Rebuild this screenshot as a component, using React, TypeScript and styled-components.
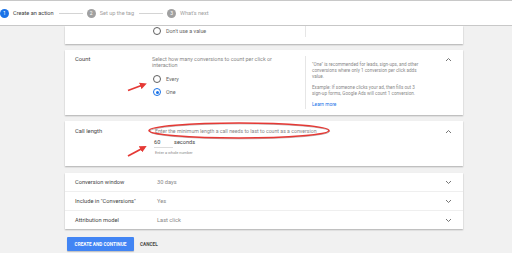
import React from 'react';
import styled, { createGlobalStyle } from 'styled-components';

const GlobalStyle = createGlobalStyle`
  html, body {
    margin: 0;
    padding: 0;
    background: #f1f1f1;
    font-family: Roboto, "Liberation Sans", Arial, sans-serif;
  }
  #root { position: relative; width: 512px; height: 253px; overflow: hidden; }
`;

const steps = [
  { n: 1, label: 'Create an action', active: true },
  { n: 2, label: 'Set up the tag', active: false },
  { n: 3, label: "What's next", active: false },
];

const rows = [
  { label: 'Conversion window', value: '30 days' },
  { label: 'Include in "Conversions"', value: 'Yes' },
  { label: 'Attribution model', value: 'Last click' },
];

const Chevron: React.FC<{ up?: boolean }> = ({ up }) => (
  <ChevronBox>
    <svg width="7" height="5" viewBox="0 0 7 5">
      <path d={up ? 'M1 4 L3.5 1.5 L6 4' : 'M1 1 L3.5 3.5 L6 1'} fill="none" stroke="#666" strokeWidth="0.9" />
    </svg>
  </ChevronBox>
);

const App: React.FC = () => {
  return (
    <>
      <GlobalStyle />
      <Header>
        {steps.map((s, i) => (
          <React.Fragment key={s.n}>
            <Step>
              <StepDot active={s.active}>{s.n}</StepDot>
              <StepLabel active={s.active}>{s.label}</StepLabel>
            </Step>
            {i < steps.length - 1 && <StepLine />}
          </React.Fragment>
        ))}
      </Header>

      <Main>
        <TopCard>
          <span />
          <RadioRow>
            <Radio />
            <RadioText>Don't use a value</RadioText>
          </RadioRow>
          <Side />
        </TopCard>

        <Card>
          <Label>Count</Label>
          <Middle>
            <Desc>Select how many conversions to count per click or interaction</Desc>
            <Radios>
              <RadioRow>
                <Radio />
                <RadioText>Every</RadioText>
              </RadioRow>
              <RadioRow>
                <Radio checked />
                <RadioText>One</RadioText>
              </RadioRow>
            </Radios>
          </Middle>
          <Side>
            <Help>
              <p>"One" is recommended for leads, sign-ups, and other conversions where only 1 conversion per click adds value.</p>
              <p>Example: If someone clicks your ad, then fills out 3 sign-up forms, Google Ads will count 1 conversion.</p>
              <LearnMore>Learn more</LearnMore>
            </Help>
            <Chevron up />
          </Side>
        </Card>

        <CallCard>
          <Label>Call length</Label>
          <CallBody>
            <Desc>Enter the minimum length a call needs to last to count as a conversion</Desc>
            <InputRow>
              <NumberField>60</NumberField>
              <Unit>seconds</Unit>
            </InputRow>
            <Hint>Enter a whole number</Hint>
          </CallBody>
          <Chevron up />
        </CallCard>

        <ListCard>
          {rows.map((r) => (
            <Row key={r.label}>
              <RowLabel>{r.label}</RowLabel>
              <RowValue>{r.value}</RowValue>
              <Chevron />
            </Row>
          ))}
        </ListCard>

        <Actions>
          <PrimaryButton>CREATE AND CONTINUE</PrimaryButton>
          <TextButton>CANCEL</TextButton>
        </Actions>
      </Main>

      <Annotations width="512" height="253" viewBox="0 0 512 253">
        <defs>
          <marker id="head" markerWidth="7" markerHeight="7" refX="4" refY="3.5" orient="auto" markerUnits="userSpaceOnUse">
            <path d="M0 0 L7 3.5 L0 7 Z" fill="#e53935" />
          </marker>
        </defs>
        <line x1="128" y1="90.5" x2="144" y2="84.5" stroke="#e53935" strokeWidth="1.8" markerEnd="url(#head)" />
        <line x1="128" y1="156" x2="144" y2="147.5" stroke="#e53935" strokeWidth="1.8" markerEnd="url(#head)" />
        <ellipse cx="239" cy="130.5" rx="90" ry="7.5" fill="none" stroke="#5a3a3a" strokeWidth="0.8" opacity="0.5" transform="translate(0.5 0.8)" />
        <ellipse cx="239" cy="130.5" rx="90" ry="7.5" fill="none" stroke="#e53935" strokeWidth="1.6" />
      </Annotations>
    </>
  );
};

const Header = styled.div`
  height: 24px;
  background: #fff;
  border-top: 1px solid #c8c8c8;
  border-bottom: 1px solid #c8c8c8;
  display: flex;
  align-items: center;
  box-sizing: content-box;
`;

const Step = styled.div`
  display: flex;
  align-items: center;
  gap: 4px;
`;

const StepDot = styled.span<{ active?: boolean }>`
  width: 9px;
  height: 9px;
  border-radius: 50%;
  background: ${(p) => (p.active ? '#1a73e8' : '#a0a0a0')};
  color: #fff;
  font-size: 5px;
  display: flex;
  align-items: center;
  justify-content: center;
`;

const StepLabel = styled.span<{ active?: boolean }>`
  font-size: 5.6px;
  color: ${(p) => (p.active ? '#3c3c3c' : '#a0a0a0')};
`;

const StepLine = styled.span`
  width: 24px;
  height: 1px;
  background: #d4d4d4;
  margin: 0 4px 0 5px;
`;

const Main = styled.div`
  width: 398px;
  margin-left: 65px;
  display: flex;
  flex-direction: column;
`;

const CardBase = styled.div`
  background: #fff;
  box-shadow: 0 1px 1.5px rgba(0, 0, 0, 0.28);
`;

const TopCard = styled(CardBase)`
  height: 18px;
  display: grid;
  grid-template-columns: 87px 153px 1fr;
  align-items: start;
  & > div:last-child {
    height: 11px;
  }
  & > div:nth-child(2) {
    margin-top: 1px;
  }
`;

const Card = styled(CardBase)`
  margin-top: 6px;
  height: 65px;
  display: grid;
  grid-template-columns: 87px 153px 1fr;
  padding-top: 6px;
  box-sizing: border-box;
`;

const Label = styled.div`
  font-size: 5.8px;
  color: #444;
  padding-left: 10px;
  line-height: 7px;
`;

const Middle = styled.div`
  display: flex;
  flex-direction: column;
`;

const Desc = styled.div`
  font-size: 5.4px;
  line-height: 6px;
  color: #888;
  width: 145px;
`;

const Radios = styled.div`
  margin-top: 7px;
  display: flex;
  flex-direction: column;
  gap: 5px;
`;

const RadioRow = styled.div`
  display: flex;
  align-items: center;
  gap: 5px;
  margin-left: 1px;
`;

const Radio = styled.span<{ checked?: boolean }>`
  width: 6px;
  height: 6px;
  border-radius: 50%;
  border: 1px solid ${(p) => (p.checked ? '#1a73e8' : '#5f5f5f')};
  position: relative;
  &::after {
    content: '';
    display: ${(p) => (p.checked ? 'block' : 'none')};
    position: absolute;
    inset: 1.5px;
    border-radius: 50%;
    background: #1a73e8;
  }
`;

const RadioText = styled.span`
  font-size: 5.4px;
  color: #666;
`;

const Side = styled.div`
  border-left: 1px solid #e6e6e6;
  margin-bottom: 6px;
  display: flex;
  justify-content: space-between;
  padding-left: 6px;
`;

const Help = styled.div`
  width: 112px;
  padding-top: 6px;
  p {
    margin: 0 0 5px;
    font-size: 4.6px;
    line-height: 6px;
    color: #8a8a8a;
  }
`;

const LearnMore = styled.div`
  font-size: 4.8px;
  color: #1a73e8;
  margin-top: 2px;
`;

const ChevronBox = styled.span`
  width: 7px;
  height: 7px;
  margin-right: 11px;
  display: flex;
  align-items: center;
  justify-content: center;
`;

const CallCard = styled(CardBase)`
  margin-top: 6px;
  height: 45px;
  padding-top: 7px;
  box-sizing: border-box;
  display: grid;
  grid-template-columns: 90px 1fr auto;
  align-items: start;
`;

const CallBody = styled.div`
  display: flex;
  flex-direction: column;
  ${Desc} {
    width: auto;
    font-size: 5.2px;
  }
`;

const InputRow = styled.div`
  display: flex;
  align-items: flex-end;
  margin-top: 5px;
`;

const NumberField = styled.span`
  width: 19px;
  font-size: 5.6px;
  color: #444;
  padding-bottom: 2px;
  border-bottom: 1px solid #dcdcdc;
  margin-left: -1px;
`;

const Unit = styled.span`
  font-size: 5.6px;
  color: #444;
  margin-left: 1px;
  padding-bottom: 3px;
`;

const Hint = styled.div`
  font-size: 3.9px;
  color: #8a8a8a;
  margin-top: 2px;
`;

const ListCard = styled(CardBase)`
  margin-top: 7px;
  display: flex;
  flex-direction: column;
`;

const Row = styled.div`
  height: 18px;
  display: grid;
  grid-template-columns: 92px 1fr auto;
  align-items: center;
  & + & {
    border-top: 1px solid #efefef;
  }
`;

const RowLabel = styled.span`
  font-size: 5.7px;
  color: #444;
  padding-left: 10px;
`;

const RowValue = styled.span`
  font-size: 5.7px;
  color: #888;
`;

const Actions = styled.div`
  display: flex;
  align-items: center;
  gap: 6px;
  margin-top: 8px;
  padding-left: 2px;
`;

const PrimaryButton = styled.button`
  height: 14px;
  width: 67px;
  padding: 0;
  border: none;
  border-radius: 1px;
  background: #4285f4;
  color: #fff;
  font-family: Roboto, "Liberation Sans", Arial, sans-serif;
  font-size: 4.7px;
  font-weight: 700;
  box-shadow: 0 1px 1px rgba(0, 0, 0, 0.2);
`;

const TextButton = styled.button`
  padding: 0;
  border: none;
  background: none;
  color: #4a4a4a;
  font-family: Roboto, "Liberation Sans", Arial, sans-serif;
  font-size: 4.7px;
  font-weight: 700;
`;

const Annotations = styled.svg`
  position: absolute;
  left: 0;
  top: 0;
  pointer-events: none;
`;

export default App;
